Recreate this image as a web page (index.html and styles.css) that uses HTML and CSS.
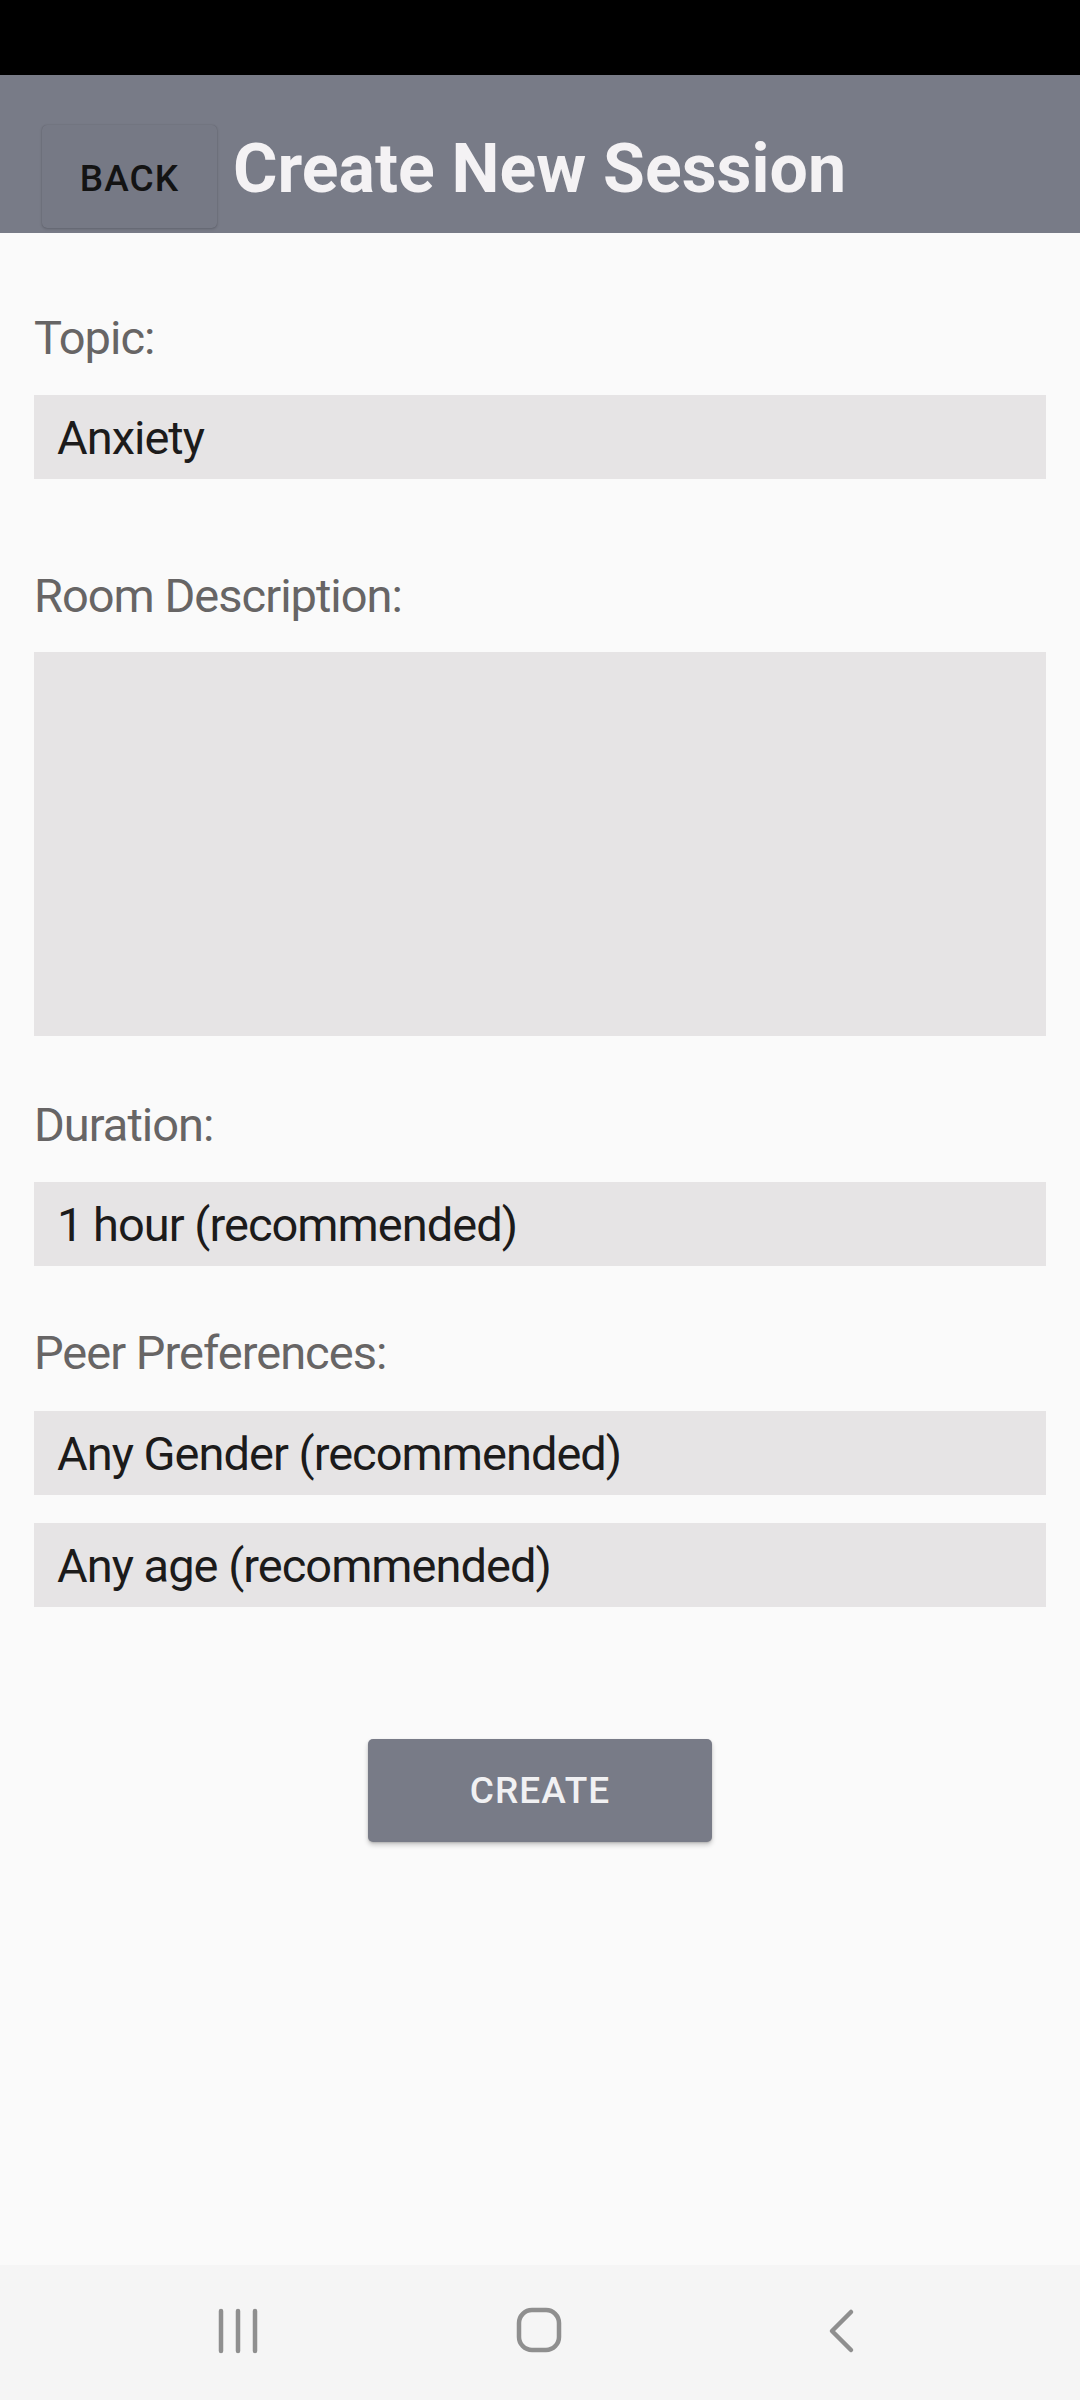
FILE: index.html
```html
<!DOCTYPE html>
<html lang="en">
<head>
<meta charset="utf-8">
<title>Create New Session</title>
<link rel="stylesheet" href="styles.css">
</head>
<body>
<div class="screen">
  <div class="status-bar"></div>
  <header class="app-bar">
    <button class="back-btn">BACK</button>
    <h1 class="title">Create New Session</h1>
  </header>
  <main class="form">
    <label class="label label-first">Topic:</label>
    <div class="field">Anxiety</div>

    <label class="label label-room">Room Description:</label>
    <div class="textarea"></div>

    <label class="label label-duration">Duration:</label>
    <div class="field">1 hour (recommended)</div>

    <label class="label label-peer">Peer Preferences:</label>
    <div class="field">Any Gender (recommended)</div>
    <div class="field field-age">Any age (recommended)</div>

    <div class="actions">
      <button class="create-btn">CREATE</button>
    </div>
  </main>
  <nav class="nav-bar">
    <div class="nav-cell">
      <svg width="40" height="46" viewBox="0 0 40 46" class="nav-icon">
        <line x1="3" y1="3" x2="3" y2="43" />
        <line x1="20" y1="3" x2="20" y2="43" />
        <line x1="37" y1="3" x2="37" y2="43" />
      </svg>
    </div>
    <div class="nav-cell">
      <svg width="48" height="48" viewBox="0 0 48 48" class="nav-icon">
        <rect x="3" y="3" width="40" height="40" rx="13" ry="13" />
      </svg>
    </div>
    <div class="nav-cell">
      <svg width="28" height="46" viewBox="0 0 28 46" class="nav-icon">
        <polyline points="23,4 4,23 23,42" />
      </svg>
    </div>
  </nav>
</div>
</body>
</html>
```

FILE: styles.css
```css
* {
  box-sizing: border-box;
}

html, body {
  margin: 0;
  padding: 0;
}

body {
  background: #fafafa;
  font-family: Roboto, "Noto Sans", "Liberation Sans", sans-serif;
}

.screen {
  width: 1080px;
  height: 2400px;
  display: flex;
  flex-direction: column;
  background: #fafafa;
}

.status-bar {
  height: 75px;
  flex: none;
  background: #000;
}

.app-bar {
  height: 158px;
  flex: none;
  background: #787b87;
  display: flex;
  align-items: flex-start;
  padding: 50px 0 0 42px;
}

.back-btn {
  width: 175px;
  height: 103px;
  border: none;
  border-radius: 5px;
  background: #767985;
  box-shadow: 0 1px 3px rgba(0, 0, 0, 0.18), 0 0 1px rgba(0, 0, 0, 0.2);
  font-family: Roboto, "Noto Sans", sans-serif;
  font-weight: 500;
  font-size: 37px;
  letter-spacing: 0.03em;
  color: #131313;
  padding: 0;
  padding-top: 3px;
}

.title {
  margin: 4px 0 0 16px;
  font-size: 68px;
  line-height: 80px;
  font-weight: 700;
  color: #f4f2f4;
}

.form {
  flex: 1;
  display: flex;
  flex-direction: column;
  padding: 0 34px;
}

.label {
  display: block;
  font-size: 47px;
  line-height: 55px;
  letter-spacing: -0.021em;
  color: #676565;
  margin-bottom: 30px;
}

.label-first {
  margin-top: 77px;
}

.label-room {
  margin-top: 89px;
  margin-bottom: 29px;
}

.label-duration {
  margin-top: 61px;
}

.label-peer {
  margin-top: 59px;
  margin-bottom: 31px;
}

.field {
  height: 84px;
  background: #e6e4e5;
  display: flex;
  align-items: center;
  padding-left: 23px;
  font-size: 47px;
  line-height: 55px;
  letter-spacing: -0.021em;
  color: #1c1b1b;
}

.field-age {
  margin-top: 28px;
}

.textarea {
  height: 384px;
  background: #e6e4e5;
}

.actions {
  display: flex;
  justify-content: center;
  margin-top: 132px;
}

.create-btn {
  width: 344px;
  height: 103px;
  border: none;
  border-radius: 5px;
  background: #787b87;
  box-shadow: 0 3px 5px rgba(0, 0, 0, 0.2), 0 1px 2px rgba(0, 0, 0, 0.14);
  font-family: Roboto, "Noto Sans", sans-serif;
  font-weight: 500;
  font-size: 37px;
  letter-spacing: 0.03em;
  color: #f1f1f3;
  padding: 0;
}

.nav-bar {
  height: 135px;
  flex: none;
  background: #f5f5f5;
  display: grid;
  grid-template-columns: repeat(3, 302px);
  justify-content: center;
  align-items: center;
  padding-bottom: 3px;
}

.nav-cell {
  display: flex;
  justify-content: center;
  align-items: center;
}

.nav-icon {
  fill: none;
  stroke: #8f8f8f;
  stroke-width: 4.5;
  stroke-linecap: round;
  stroke-linejoin: round;
}
```
